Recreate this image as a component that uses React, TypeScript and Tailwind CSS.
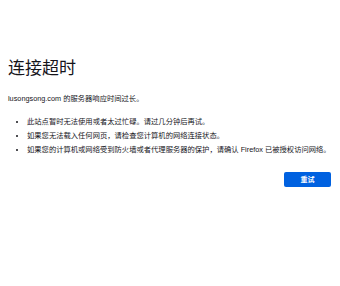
export default function App() {
  return (
    <div
      className="w-[340px] h-[286px] bg-white text-[#15141a] px-[8px] pt-[57px]"
      style={{ fontFamily: '"Liberation Sans", "Noto Sans CJK SC", sans-serif' }}
    >
      <h1 className="text-[17px] leading-[24px] font-normal">连接超时</h1>
      <p className="mt-[12px] text-[7.3px] leading-[12px]">lusongsong.com 的服务器响应时间过长。</p>
      <ul className="mt-[10px] pl-[19px] list-disc text-[7.3px] leading-[14px] text-[#15141a]">
        <li>此站点暂时无法使用或者太过忙碌。请过几分钟后再试。</li>
        <li>如果您无法载入任何网页，请检查您计算机的网络连接状态。</li>
        <li>如果您的计算机或网络受到防火墙或者代理服务器的保护，请确认 Firefox 已被授权访问网络。</li>
      </ul>
      <div className="mt-[15px] flex justify-end pr-[1px]">
        <button className="w-[47px] h-[15px] rounded-[2px] bg-[#0061e0] text-white text-[7px] font-bold leading-none">
          重试
        </button>
      </div>
    </div>
  );
}
